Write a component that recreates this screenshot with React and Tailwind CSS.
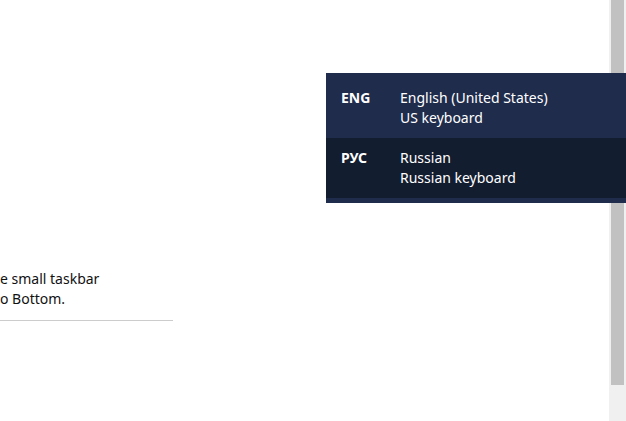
export default function App() {
    return (
        <div className="relative flex h-[421px] w-[626px] overflow-hidden bg-white" style={{ fontFamily: '"Noto Sans", "Open Sans", sans-serif' }}>
            <div className="flex-1 pt-[269px]">
                <div className="w-[173px] border-b border-[#cccccc] pb-[11px] text-[14px] leading-[20px] text-[#111111]">
                    <p>e small taskbar</p>
                    <p>o Bottom.</p>
                </div>
            </div>

            <div className="flex w-[17px] flex-col bg-[#f0f0f0] pl-[2px] pr-[2px]">
                <div className="h-[385px] bg-[#c1c1c1]" />
            </div>

            <div className="absolute left-[326px] top-[73px] w-[300px] bg-[#1f2c4c] pb-[5px] text-[14px] leading-[20px] text-white">
                <div className="flex bg-[#1f2c4c] pb-[10px] pt-[15px]">
                    <span className="w-[74px] pl-[15px] font-bold">ENG</span>
                    <div className="flex flex-col">
                        <span>English (United States)</span>
                        <span>US keyboard</span>
                    </div>
                </div>
                <div className="flex bg-[#131d30] pb-[10px] pt-[10px]">
                    <span className="w-[74px] pl-[15px] font-bold">РУС</span>
                    <div className="flex flex-col">
                        <span>Russian</span>
                        <span>Russian keyboard</span>
                    </div>
                </div>
            </div>
        </div>
    )
}
